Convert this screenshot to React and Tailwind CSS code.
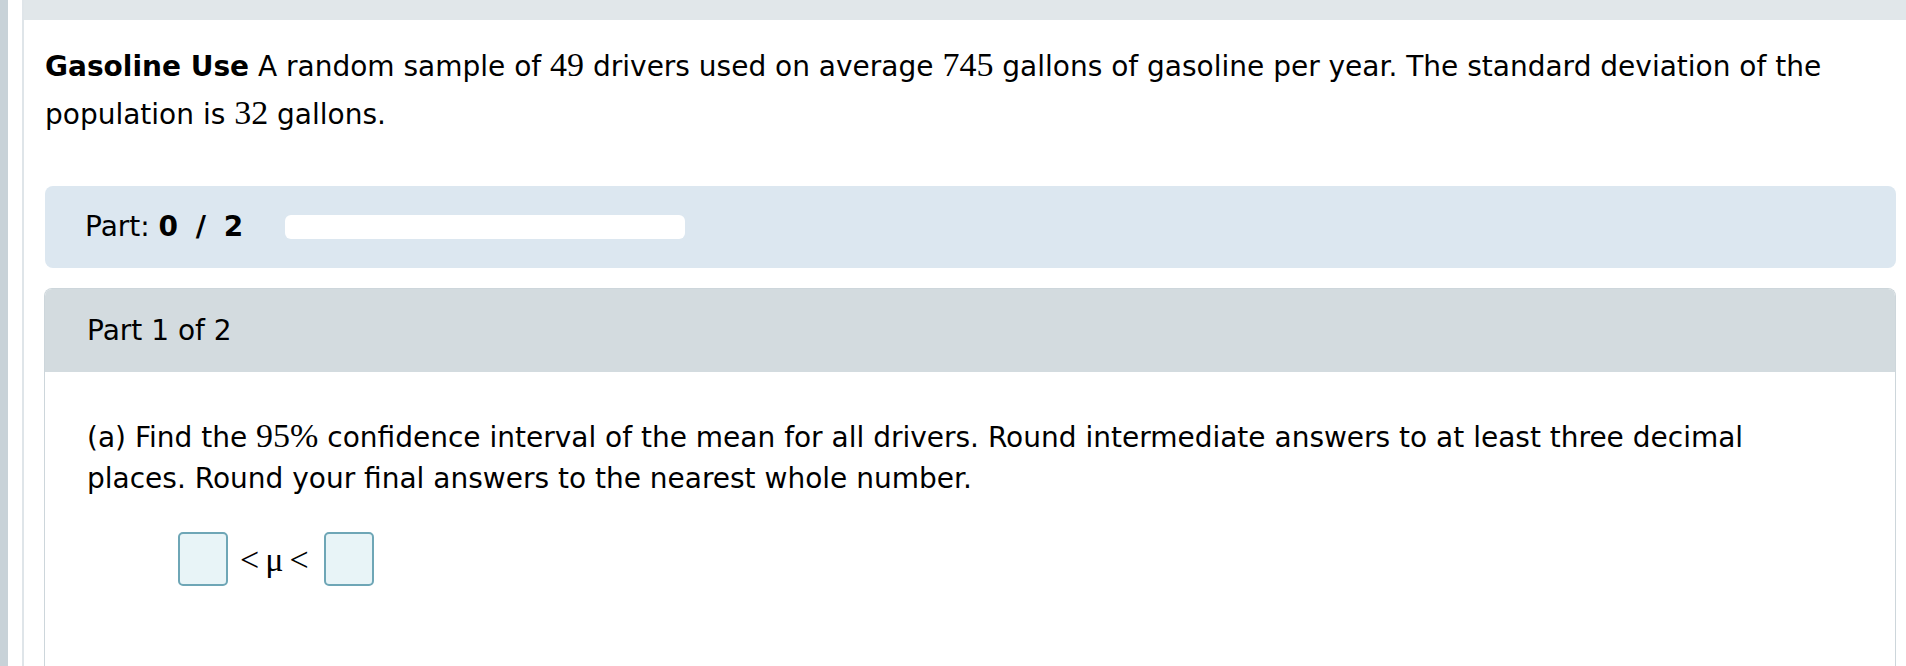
import React from 'react';

const sans = { fontFamily: '"DejaVu Sans", Verdana, sans-serif' };

function Num({ children }) {
  return <span className="font-['Liberation_Serif',serif] text-[34px] leading-none">{children}</span>;
}

function AnswerBox() {
  return <input type="text" className="w-[50px] h-[54px] rounded-[5px] border-2 border-[#6ea6b6] bg-[#e8f4f7] outline-none" />;
}

export default function App() {
  return (
    <div className="flex min-h-[666px] bg-white text-black" style={sans}>
      <div className="w-[8px] shrink-0 bg-[#c8d2d8]" />
      <div className="w-[14px] shrink-0" />
      <div className="flex-1 border-l-2 border-[#dfe5e9] flex flex-col">
        <div className="h-[20px] bg-[#e1e7ea]" />

        <div className="pl-[21px] pr-[10px] flex flex-col">
          <p className="mt-[23px] text-[28px] leading-[48px]">
            <b>Gasoline Use</b> A random sample of <Num>49</Num> drivers used on average <Num>745</Num> gallons of gasoline per year. The standard deviation of the population is <Num>32</Num> gallons.
          </p>

          {/* progress */}
          <div className="mt-[47px] h-[82px] rounded-[8px] bg-[#dce7f0] flex items-center pl-[40px]">
            <span className="text-[28px]">Part: <b className="tracking-[2px] [word-spacing:4px]">0 / 2</b></span>
            <div className="ml-[40px] w-[400px] h-[24px] rounded-[6px] bg-white" />
          </div>

          {/* part 1 */}
          <div className="mt-[20px] -ml-px flex-1 border border-b-0 border-[#cdd6db] rounded-t-[8px] flex flex-col min-h-[378px]">
            <div className="h-[83px] bg-[#d3dbdf] rounded-t-[7px] flex items-center pl-[42px]">
              <span className="text-[28px]">Part 1 of 2</span>
            </div>
            <div className="pl-[42px] pr-[80px] pt-[45px]">
              <p className="text-[28px] leading-[41px]">
                (a) Find the <Num>95%</Num> confidence interval of the mean for all drivers. Round intermediate answers to at least three decimal places. Round your final answers to the nearest whole number.
              </p>
              <div className="mt-[33px] ml-[91px] flex items-center">
                <AnswerBox />
                <span className="font-['Liberation_Serif',serif] text-[34px] ml-[12px] mr-[15px] flex items-center gap-[6px]">
                  <span>&lt;</span>
                  <span>μ</span>
                  <span>&lt;</span>
                </span>
                <AnswerBox />
              </div>
            </div>
          </div>
        </div>
      </div>
    </div>
  );
}
